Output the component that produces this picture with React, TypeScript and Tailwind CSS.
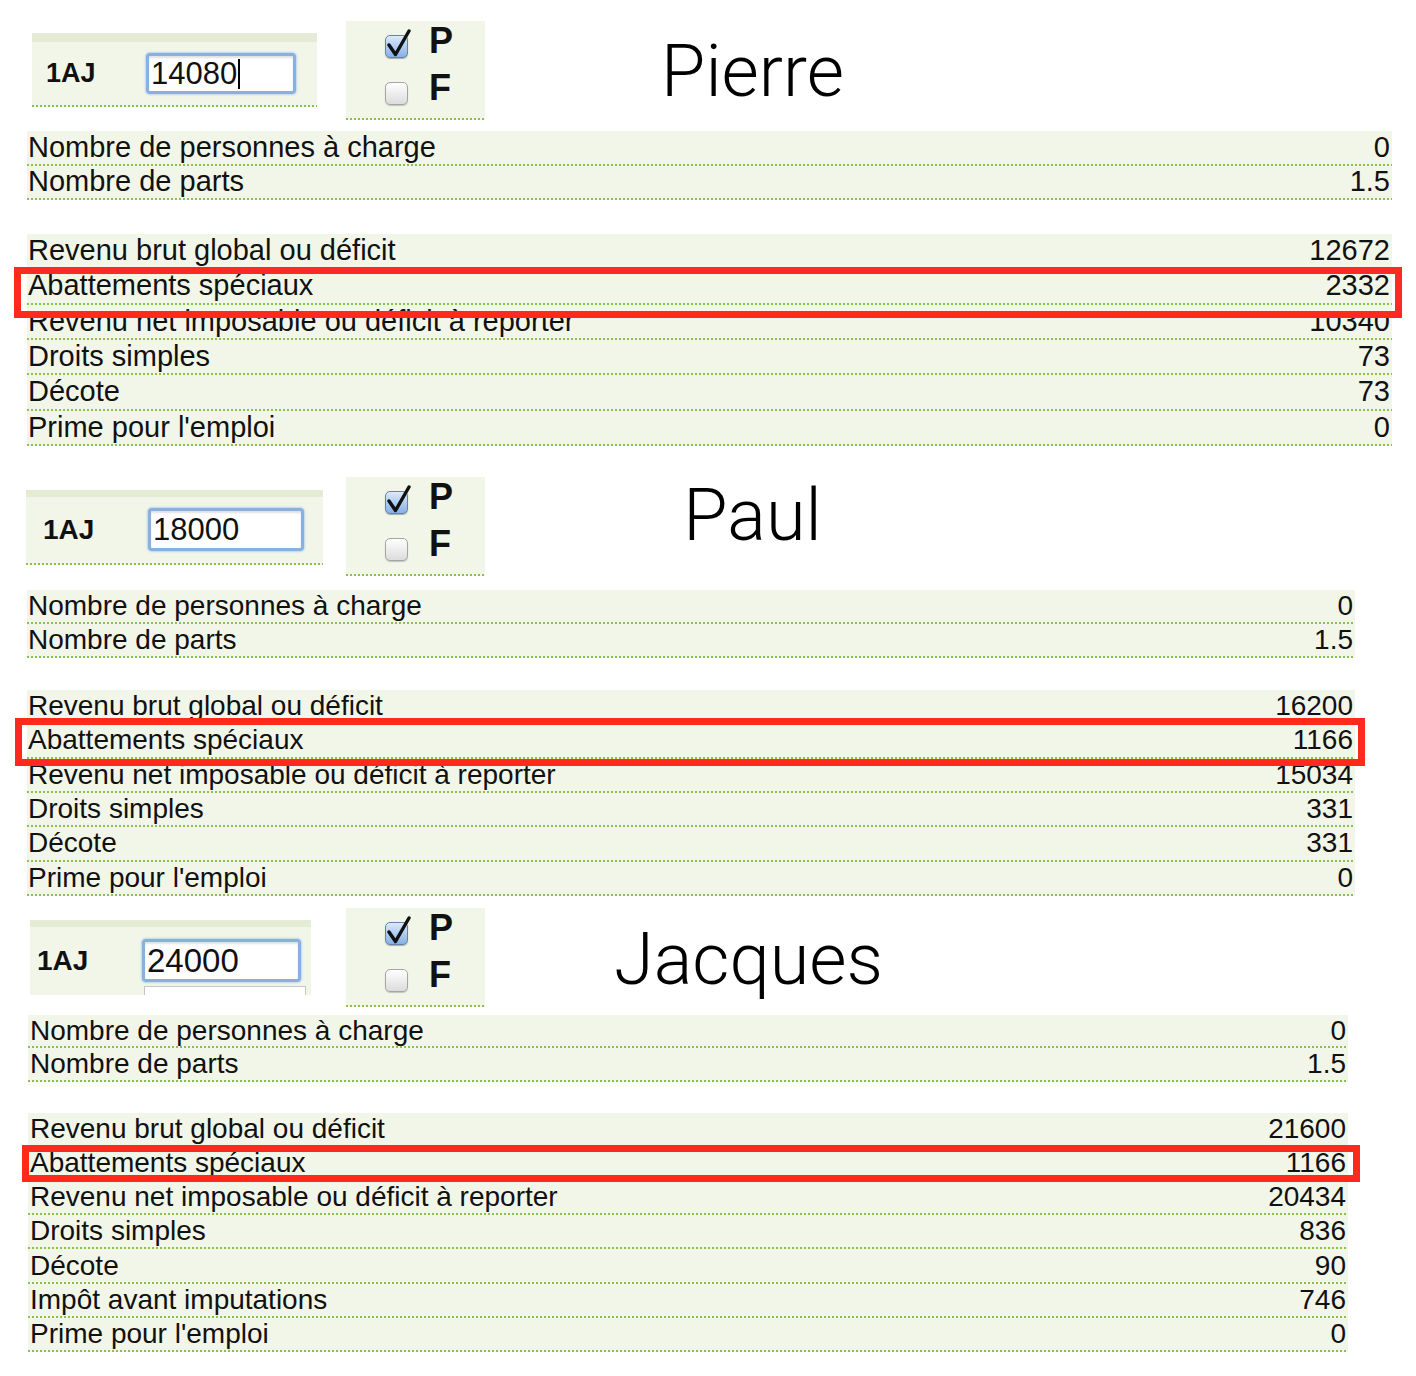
import React from "react";

type Row = [string, string];

const sans = "font-['Liberation_Sans',Arial,Helvetica,sans-serif]";

// ligne pointillée verte, comme les séparateurs du formulaire
function Dots() {
    return <div className="h-[2px] shrink-0 bg-[repeating-linear-gradient(90deg,#8bbf4e_0px,#8bbf4e_2px,transparent_2px,transparent_4px)]" />;
}

function CheckBox({ checked }: { checked?: boolean }) {
    if (checked) {
        return (
            <div className="relative w-[23px] h-[23px] shrink-0">
                <div className="w-full h-full rounded-[5px] border border-[#6383ad] bg-linear-to-b from-[#dceafb] to-[#86b1e4] shadow-[0_1px_1px_rgba(0,0,0,0.3)]" />
                <svg className="absolute -top-[6px] left-0 w-[28px] h-[30px]" viewBox="0 0 28 30">
                    <path d="M4 16 L10.5 25.5 L24 2" fill="none" stroke="#111" strokeWidth="3.4" strokeLinecap="round" strokeLinejoin="round" />
                </svg>
            </div>
        );
    }
    return <div className="w-[23px] h-[23px] shrink-0 rounded-[5px] border border-[#a5a5a5] bg-linear-to-b from-white to-[#dcdcdc] shadow-[0_1px_1px_rgba(0,0,0,0.2)]" />;
}

function DataRow({ row, h }: { row: Row; h: string }) {
    return (
        <div className={`flex flex-col bg-[#f2f6e9] ${h}`}>
            <div className="flex-1 flex items-center justify-between leading-none">
                <span>{row[0]}</span>
                <span>{row[1]}</span>
            </div>
            <Dots />
        </div>
    );
}

type Props = {
    name: string;
    value: string;
    caret?: boolean;
    dropdown?: boolean;
    dotted?: boolean;
    top: string;
    inPanel: string;
    strip: string;
    inBody: string;
    label: string;
    inputBox: string;
    inputText: string;
    cbPanel: string;
    title: string;
    table: string;
    b1: string;
    r1: string;
    b2: string;
    r2: string;
    red: string;
    rows1: Row[];
    rows2: Row[];
};

function Section(p: Props) {
    return (
        <div className={p.top}>
            <div className="flex items-start">
                {/* champ 1AJ */}
                <div className={`bg-[#f2f6e9] overflow-hidden ${p.inPanel}`}>
                    <div className={`bg-[#e4ecd6] ${p.strip}`} />
                    <div className={`flex items-center ${p.inBody}`}>
                        <div className={`font-bold leading-none text-[#111] ${p.label}`}>1AJ</div>
                        <div className="relative">
                            <div className={`flex items-center bg-white border-[3px] border-[#88b1e0] rounded-[4px] shadow-[0_0_2px_1px_#bcd3ef,inset_0_2px_2px_rgba(0,0,0,0.12)] pl-[2px] ${p.inputBox}`}>
                                <span className={`leading-none text-[#111] ${p.inputText}`}>{p.value}</span>
                                {p.caret && <span className="w-[2px] h-[30px] bg-black ml-[1px]" />}
                            </div>
                            {p.dropdown && (
                                <div className="absolute top-[calc(100%+4px)] left-[2px] w-[162px] h-[20px] bg-white border border-[#c6c6c6]" />
                            )}
                        </div>
                    </div>
                    {p.dotted && <Dots />}
                </div>

                {/* cases P / F */}
                <div className={`w-[139px] h-[99px] flex flex-col bg-[#f2f6e9] ${p.cbPanel}`}>
                    <div className="flex-1 pl-[39px]">
                        <div className="flex items-start h-[47px]">
                            <div className="mt-[14px]"><CheckBox checked /></div>
                            <span className="ml-[21px] mt-[2px] text-[36px] font-bold leading-none text-[#111]">P</span>
                        </div>
                        <div className="flex items-start h-[47px]">
                            <div className="mt-[14px]"><CheckBox /></div>
                            <span className="ml-[21px] mt-[2px] text-[36px] font-bold leading-none text-[#111]">F</span>
                        </div>
                    </div>
                    <Dots />
                </div>

                <div className={`text-center font-['Roboto',sans-serif] font-light text-[72px] leading-none text-black ${p.title}`}>
                    {p.name}
                </div>
            </div>

            <div className={`text-[#111] ${p.table}`}>
                <div className={p.b1}>
                    {p.rows1.map((r) => <DataRow key={r[0]} row={r} h={p.r1} />)}
                </div>
                <div className={`relative ${p.b2}`}>
                    {p.rows2.map((r) => <DataRow key={r[0]} row={r} h={p.r2} />)}
                    <div className={`absolute border-[7px] border-[#fe2a20] ${p.red}`} />
                </div>
            </div>
        </div>
    );
}

export default function App() {
    return (
        <div className={`w-[1416px] min-h-[1376px] bg-white ${sans}`}>
            <Section
                name="Pierre"
                value="14080"
                caret
                dotted
                top="pt-[21px]"
                inPanel="ml-[32px] mt-[12px] w-[285px]"
                strip="h-[9px]"
                inBody="h-[63px]"
                label="pl-[14px] w-[114px] text-[27px]"
                inputBox="w-[150px] h-[41px]"
                inputText="text-[31px]"
                cbPanel="ml-[29px]"
                title="w-[535px] mt-[15px]"
                table="ml-[27px] w-[1365px] text-[29px] [&_span:first-child]:pl-[1px] [&_span:last-child]:pr-[2px]"
                b1="mt-[11px]"
                r1="h-[34.5px]"
                b2="mt-[34px]"
                r2="h-[35.33px]"
                red="-left-[13px] top-[33px] w-[1388px] h-[51px]"
                rows1={[
                    ["Nombre de personnes à charge", "0"],
                    ["Nombre de parts", "1.5"],
                ]}
                rows2={[
                    ["Revenu brut global ou déficit", "12672"],
                    ["Abattements spéciaux", "2332"],
                    ["Revenu net imposable ou déficit à reporter", "10340"],
                    ["Droits simples", "73"],
                    ["Décote", "73"],
                    ["Prime pour l'emploi", "0"],
                ]}
            />
            <Section
                name="Paul"
                value="18000"
                dotted
                top="pt-[31px]"
                inPanel="ml-[26px] mt-[13px] w-[297px]"
                strip="h-[7px]"
                inBody="h-[66px]"
                label="pl-[17px] w-[122px] text-[28px]"
                inputBox="w-[156px] h-[43px]"
                inputText="text-[31px]"
                cbPanel="ml-[23px]"
                title="w-[535px] mt-[3px]"
                table="ml-[27px] w-[1328px] text-[28px] [&_span:first-child]:pl-[1px] [&_span:last-child]:pr-[2px]"
                b1="mt-[14px]"
                r1="h-[34px]"
                b2="mt-[32px]"
                r2="h-[34.33px]"
                red="-left-[12px] top-[28px] w-[1350px] h-[48px]"
                rows1={[
                    ["Nombre de personnes à charge", "0"],
                    ["Nombre de parts", "1.5"],
                ]}
                rows2={[
                    ["Revenu brut global ou déficit", "16200"],
                    ["Abattements spéciaux", "1166"],
                    ["Revenu net imposable ou déficit à reporter", "15034"],
                    ["Droits simples", "331"],
                    ["Décote", "331"],
                    ["Prime pour l'emploi", "0"],
                ]}
            />
            <Section
                name="Jacques"
                value="24000"
                dropdown
                top="pt-[12px]"
                inPanel="ml-[30px] mt-[12px] w-[281px]"
                strip="h-[7px]"
                inBody="h-[68px]"
                label="pl-[7px] w-[112px] text-[28px]"
                inputBox="w-[159px] h-[43px]"
                inputText="text-[33px]"
                cbPanel="ml-[35px]"
                title="w-[527px] mt-[16px]"
                table="ml-[28px] w-[1320px] text-[28px] [&_span:first-child]:pl-[2px] [&_span:last-child]:pr-[2px]"
                b1="mt-[8px]"
                r1="h-[33.5px]"
                b2="mt-[31px]"
                r2="h-[34.14px]"
                red="-left-[6px] top-[32px] w-[1338px] h-[37px]"
                rows1={[
                    ["Nombre de personnes à charge", "0"],
                    ["Nombre de parts", "1.5"],
                ]}
                rows2={[
                    ["Revenu brut global ou déficit", "21600"],
                    ["Abattements spéciaux", "1166"],
                    ["Revenu net imposable ou déficit à reporter", "20434"],
                    ["Droits simples", "836"],
                    ["Décote", "90"],
                    ["Impôt avant imputations", "746"],
                    ["Prime pour l'emploi", "0"],
                ]}
            />
        </div>
    );
}
